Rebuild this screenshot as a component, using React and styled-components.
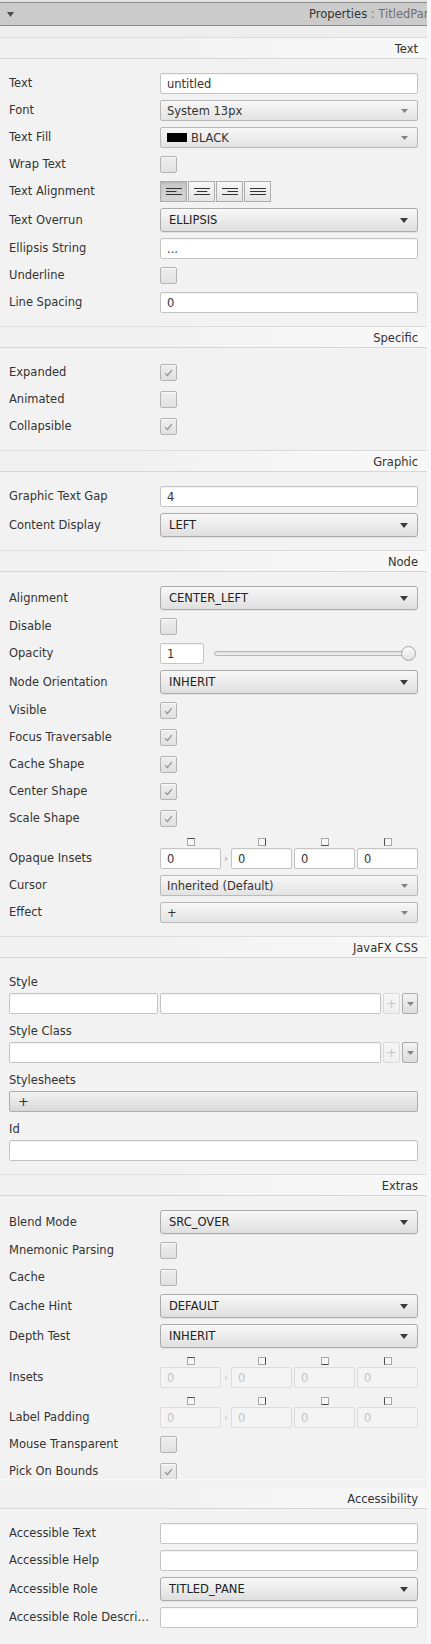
import React from "react";
import styled, { createGlobalStyle, css } from "styled-components";

const GlobalStyle = createGlobalStyle`
  html, body {
    margin: 0;
    padding: 0;
    background: #f7f7f7;
  }
  body {
    font-family: "DejaVu Sans", "Liberation Sans", sans-serif;
    font-size: 11.5px;
    color: #333;
  }
  * { box-sizing: border-box; }
`;

const Panel = styled.div`
  width: 427px;
  min-height: 1644px;
  background: #f2f2f2;
`;

const TopEdge = styled.div`
  height: 2px;
  background: #e2e2e2;
`;

const PaneHeader = styled.div`
  height: 24px;
  border-top: 1px solid #8c8c8c;
  border-bottom: 1px solid #8c8c8c;
  background: #cbcbcb;
  display: flex;
  align-items: center;
  padding-left: 7px;
`;

const Title = styled.div`
  margin-left: auto;
  width: 118px;
  white-space: nowrap;
  overflow: hidden;
  color: #333;
  span {
    color: #6f6f6f;
  }
`;

const ScrollTop = styled.div`
  height: 11px;
  background: #eeeeee;
`;

const SectionHeader = styled.div`
  height: ${p => (p.$noTop ? 21 : 22)}px;
  border-top: ${p => (p.$noTop ? "none" : "1px solid #dcdcdc")};
  border-bottom: 1px solid #d7d7d7;
  background: linear-gradient(to right, #f1f1f1 0%, #f1f1f1 34%, #f5f5f5 60%, #f8f8f8 100%);
  display: flex;
  align-items: center;
  justify-content: flex-end;
  padding: 1px 9px 0 0;
  color: #333;
`;

const FormBody = styled.div`
  display: grid;
  grid-template-columns: 151px 1fr;
  row-gap: 6px;
  align-items: center;
  align-content: start;
  padding: 14px 9px 13px;
  ${p =>
    p.$clip &&
    css`
      height: ${p.$clip}px;
      overflow: hidden;
      border-bottom: 1px solid #fafafa;
    `}
  ${p => p.$bottom && css`padding-bottom: ${p.$bottom}px;`}
`;

const StackBody = styled.div`
  display: flex;
  flex-direction: column;
  gap: 5px;
  padding: 12px 9px 13px;
`;

const SectionGap = styled.div`
  height: 8px;
`;

const Label = styled.div`
  line-height: 21px;
  white-space: nowrap;
  overflow: hidden;
  text-overflow: ellipsis;
  padding-right: 9px;
  ${p => p.$end && "align-self: end;"}
`;

const Field = styled.div`
  display: flex;
  flex-direction: column;
  gap: 3px;
`;

const FieldLabel = styled.div`
  height: 20px;
  line-height: 15px;
  display: flex;
  align-items: flex-end;
`;

const Line = styled.div`
  display: flex;
  gap: 2px;
`;

const TextInput = styled.input`
  display: block;
  width: ${p => (p.$w ? `${p.$w}px` : "100%")};
  flex: ${p => (p.$grow ? "1 1 0" : "none")};
  min-width: 0;
  height: 21px;
  margin: 0;
  padding: 0 6px;
  font: inherit;
  color: #333;
  background: #fff;
  border: 1px solid #c4c4c4;
  border-radius: 2px;
  box-shadow: inset 0 1px 1px rgba(0, 0, 0, 0.05);
  outline: none;
  ${p =>
    p.$off &&
    css`
      background: #f4f4f4;
      border-color: #dcdcdc;
      color: #c3c3c3;
      box-shadow: none;
    `}
`;

const CheckCell = styled.div`
  height: 21px;
  display: flex;
  align-items: center;
`;

const Box = styled.span`
  width: 17px;
  height: 17px;
  display: inline-flex;
  align-items: center;
  justify-content: center;
  border: 1px solid #b4b4b4;
  border-radius: 2px;
  background: linear-gradient(#eeeeee, #e1e1e1);
  box-shadow: inset 0 1px 0 rgba(255, 255, 255, 0.7);
`;

const Combo = styled.div`
  height: 21px;
  display: flex;
  align-items: center;
  gap: 4px;
  padding: 0 9px 0 6px;
  border: 1px solid #b9b9b9;
  border-radius: 2px;
  background: linear-gradient(#f7f7f7, #e3e3e3);
  color: #333;
`;

const Choice = styled.div`
  height: 24px;
  display: flex;
  align-items: center;
  padding: 0 9px 0 8px;
  border: 1px solid #ababab;
  border-radius: 3px;
  background: linear-gradient(#f8f8f8, #dfdfdf);
  box-shadow: 0 1px 1px rgba(0, 0, 0, 0.07);
  color: #222;
`;

const Grow = styled.span`
  flex: 1;
  white-space: nowrap;
`;

const Swatch = styled.span`
  width: 20px;
  height: 9px;
  background: ${p => p.$color};
`;

const SegGroup = styled.div`
  display: flex;
  gap: 1px;
`;

const Seg = styled.div`
  width: 27px;
  height: 21px;
  display: flex;
  align-items: center;
  justify-content: center;
  border: 1px solid #adadad;
  background: ${p =>
    p.$on ? "linear-gradient(#c9c9c9, #d5d5d5)" : "linear-gradient(#f6f6f6, #e5e5e5)"};
  box-shadow: ${p => (p.$on ? "inset 0 1px 2px rgba(0,0,0,.12)" : "none")};
`;

const SliderRow = styled.div`
  display: flex;
  align-items: center;
`;

const Track = styled.div`
  position: relative;
  flex: 1;
  height: 5px;
  margin: 0 5px 0 10px;
  border: 1px solid #b6b6b6;
  border-radius: 3px;
  background: linear-gradient(#dcdcdc, #f3f3f3);
`;

const Thumb = styled.span`
  position: absolute;
  right: -4px;
  top: 50%;
  width: 15px;
  height: 15px;
  margin-top: -7.5px;
  border-radius: 50%;
  border: 1px solid #a4a4a4;
  background: linear-gradient(#fbfbfb, #e1e1e1);
`;

const InsetsWrap = styled.div`
  display: flex;
  flex-direction: column;
  gap: 2px;
  padding-top: 2px;
`;

const InsetsLine = styled.div`
  display: flex;
  gap: 2px;
  height: ${p => p.$h}px;
  align-items: center;
`;

const InsetsCell = styled.div`
  width: 61px;
  display: flex;
  justify-content: center;
`;

const Chevron = styled.span`
  width: 6px;
  text-align: center;
  color: ${p => (p.$off ? "#c8c8c8" : "#a0a0a0")};
  font-size: 11px;
`;

const SmallButton = styled.div`
  width: ${p => p.$w}px;
  height: 21px;
  flex: none;
  display: flex;
  align-items: center;
  justify-content: center;
  border: 1px solid ${p => (p.$off ? "#dadada" : "#ababab")};
  border-radius: 2px;
  background: ${p =>
    p.$off ? "linear-gradient(#f6f6f6, #efefef)" : "linear-gradient(#f3f3f3, #dcdcdc)"};
  color: ${p => (p.$off ? "#c6c6c6" : "#444")};
  font-size: 13px;
`;

const WideButton = styled.div`
  height: 21px;
  display: flex;
  align-items: center;
  padding-left: 8px;
  border: 1px solid #adadad;
  border-radius: 2px;
  background: linear-gradient(#f2f2f2, #d9d9d9);
  color: #333;
  font-size: 13px;
`;

const Arrow = ({ big }) =>
  big ? (
    <svg width="8" height="5" viewBox="0 0 8 5">
      <polygon points="0,0 8,0 4,5" fill="#3a3a3a" />
    </svg>
  ) : (
    <svg width="7" height="4" viewBox="0 0 7 4">
      <polygon points="0,0 7,0 3.5,4" fill="#838383" />
    </svg>
  );

const CheckMark = () => (
  <svg width="9" height="8" viewBox="0 0 9 8">
    <path d="M1.2 4.2 L3.4 6.6 L7.8 1.2" fill="none" stroke="#8c8c8c" strokeWidth="1.1" />
  </svg>
);

const ALIGN_LINES = {
  left: [0, 5.5],
  center: [2.75, 2.75],
  right: [5.5, 0],
  justify: [0, 0],
};

const AlignIcon = ({ kind }) => {
  const [sx, ex] = ALIGN_LINES[kind];
  return (
    <svg width="16" height="7" viewBox="0 0 16 7">
      <line x1="0" y1="0.5" x2="16" y2="0.5" stroke="#333" />
      <line x1={sx} y1="3.5" x2={16 - ex} y2="3.5" stroke="#333" />
      <line x1="0" y1="6.5" x2="16" y2="6.5" stroke="#333" />
    </svg>
  );
};

const SIDES = {
  top: [0.5, 0.5, 7.5, 0.5],
  right: [7.5, 0.5, 7.5, 7.5],
  bottom: [0.5, 7.5, 7.5, 7.5],
  left: [0.5, 0.5, 0.5, 7.5],
};

const SideIcon = ({ side }) => {
  const [x1, y1, x2, y2] = SIDES[side];
  return (
    <svg width="8" height="8" viewBox="0 0 8 8">
      <rect x="0.5" y="0.5" width="7" height="7" fill="#f7f7f7" stroke="#a9a9a9" />
      <line x1={x1} y1={y1} x2={x2} y2={y2} stroke="#4a4a4a" />
    </svg>
  );
};

const Insets = ({ off }) => (
  <InsetsWrap>
    <InsetsLine $h={9}>
      <InsetsCell><SideIcon side="top" /></InsetsCell>
      <Chevron />
      <InsetsCell><SideIcon side="right" /></InsetsCell>
      <InsetsCell><SideIcon side="bottom" /></InsetsCell>
      <InsetsCell><SideIcon side="left" /></InsetsCell>
    </InsetsLine>
    <InsetsLine $h={21}>
      <TextInput $w={61} $off={off} readOnly value="0" />
      <Chevron $off={off}>›</Chevron>
      <TextInput $w={61} $off={off} readOnly value="0" />
      <TextInput $w={61} $off={off} readOnly value="0" />
      <TextInput $w={61} $off={off} readOnly value="0" />
    </InsetsLine>
  </InsetsWrap>
);

const Control = ({ row }) => {
  switch (row.type) {
    case "input":
      return <TextInput readOnly value={row.value || ""} />;
    case "check":
      return (
        <CheckCell>
          <Box>{row.on && <CheckMark />}</Box>
        </CheckCell>
      );
    case "combo":
      return (
        <Combo>
          {row.swatch && <Swatch $color={row.swatch} />}
          <Grow>{row.value}</Grow>
          <Arrow />
        </Combo>
      );
    case "choice":
      return (
        <Choice>
          <Grow>{row.value}</Grow>
          <Arrow big />
        </Choice>
      );
    case "align":
      return (
        <SegGroup>
          {["left", "center", "right", "justify"].map((k, i) => (
            <Seg key={k} $on={i === 0}>
              <AlignIcon kind={k} />
            </Seg>
          ))}
        </SegGroup>
      );
    case "slider":
      return (
        <SliderRow>
          <TextInput $w={44} readOnly value={row.value} />
          <Track>
            <Thumb />
          </Track>
        </SliderRow>
      );
    case "insets":
      return <Insets off={row.off} />;
    default:
      return null;
  }
};

const Form = ({ rows, clip, bottom }) => (
  <FormBody $clip={clip} $bottom={bottom}>
    {rows.map(row => (
      <React.Fragment key={row.label}>
        <Label $end={row.type === "insets"}>{row.label}</Label>
        <Control row={row} />
      </React.Fragment>
    ))}
  </FormBody>
);

const TEXT_ROWS = [
  { label: "Text", type: "input", value: "untitled" },
  { label: "Font", type: "combo", value: "System 13px" },
  { label: "Text Fill", type: "combo", value: "BLACK", swatch: "#000" },
  { label: "Wrap Text", type: "check" },
  { label: "Text Alignment", type: "align" },
  { label: "Text Overrun", type: "choice", value: "ELLIPSIS" },
  { label: "Ellipsis String", type: "input", value: "..." },
  { label: "Underline", type: "check" },
  { label: "Line Spacing", type: "input", value: "0" },
];

const SPECIFIC_ROWS = [
  { label: "Expanded", type: "check", on: true },
  { label: "Animated", type: "check" },
  { label: "Collapsible", type: "check", on: true },
];

const GRAPHIC_ROWS = [
  { label: "Graphic Text Gap", type: "input", value: "4" },
  { label: "Content Display", type: "choice", value: "LEFT" },
];

const NODE_ROWS = [
  { label: "Alignment", type: "choice", value: "CENTER_LEFT" },
  { label: "Disable", type: "check" },
  { label: "Opacity", type: "slider", value: "1" },
  { label: "Node Orientation", type: "choice", value: "INHERIT" },
  { label: "Visible", type: "check", on: true },
  { label: "Focus Traversable", type: "check", on: true },
  { label: "Cache Shape", type: "check", on: true },
  { label: "Center Shape", type: "check", on: true },
  { label: "Scale Shape", type: "check", on: true },
  { label: "Opaque Insets", type: "insets" },
  { label: "Cursor", type: "combo", value: "Inherited (Default)" },
  { label: "Effect", type: "combo", value: "+" },
];

const EXTRAS_ROWS = [
  { label: "Blend Mode", type: "choice", value: "SRC_OVER" },
  { label: "Mnemonic Parsing", type: "check" },
  { label: "Cache", type: "check" },
  { label: "Cache Hint", type: "choice", value: "DEFAULT" },
  { label: "Depth Test", type: "choice", value: "INHERIT" },
  { label: "Insets", type: "insets", off: true },
  { label: "Label Padding", type: "insets", off: true },
  { label: "Mouse Transparent", type: "check" },
  { label: "Pick On Bounds", type: "check", on: true },
];

const ACCESS_ROWS = [
  { label: "Accessible Text", type: "input" },
  { label: "Accessible Help", type: "input" },
  { label: "Accessible Role", type: "choice", value: "TITLED_PANE" },
  { label: "Accessible Role Description", type: "input" },
];

const CssSection = () => (
  <StackBody>
    <Field>
      <FieldLabel>Style</FieldLabel>
      <Line>
        <TextInput $w={149} readOnly value="" />
        <TextInput $grow readOnly value="" />
        <SmallButton $w={17} $off>+</SmallButton>
        <SmallButton $w={16}><Arrow /></SmallButton>
      </Line>
    </Field>
    <Field>
      <FieldLabel>Style Class</FieldLabel>
      <Line>
        <TextInput $grow readOnly value="" />
        <SmallButton $w={17} $off>+</SmallButton>
        <SmallButton $w={16}><Arrow /></SmallButton>
      </Line>
    </Field>
    <Field>
      <FieldLabel>Stylesheets</FieldLabel>
      <WideButton>+</WideButton>
    </Field>
    <Field>
      <FieldLabel>Id</FieldLabel>
      <TextInput readOnly value="" />
    </Field>
  </StackBody>
);

export default function App() {
  return (
    <>
      <GlobalStyle />
      <Panel>
        <TopEdge />
        <PaneHeader>
          <svg width="7" height="5" viewBox="0 0 7 5">
            <polygon points="0,0 7,0 3.5,5" fill="#4b4b4b" />
          </svg>
          <Title>
            Properties <span>: TitledPane</span>
          </Title>
        </PaneHeader>
        <ScrollTop />

        <SectionHeader>Text</SectionHeader>
        <Form rows={TEXT_ROWS} />

        <SectionHeader>Specific</SectionHeader>
        <Form rows={SPECIFIC_ROWS} />

        <SectionHeader>Graphic</SectionHeader>
        <Form rows={GRAPHIC_ROWS} />

        <SectionHeader>Node</SectionHeader>
        <Form rows={NODE_ROWS} />

        <SectionHeader>JavaFX CSS</SectionHeader>
        <CssSection />

        <SectionHeader>Extras</SectionHeader>
        <Form rows={EXTRAS_ROWS} clip={284} />
        <SectionGap />

        <SectionHeader $noTop>Accessibility</SectionHeader>
        <Form rows={ACCESS_ROWS} bottom={16} />
      </Panel>
    </>
  );
}
